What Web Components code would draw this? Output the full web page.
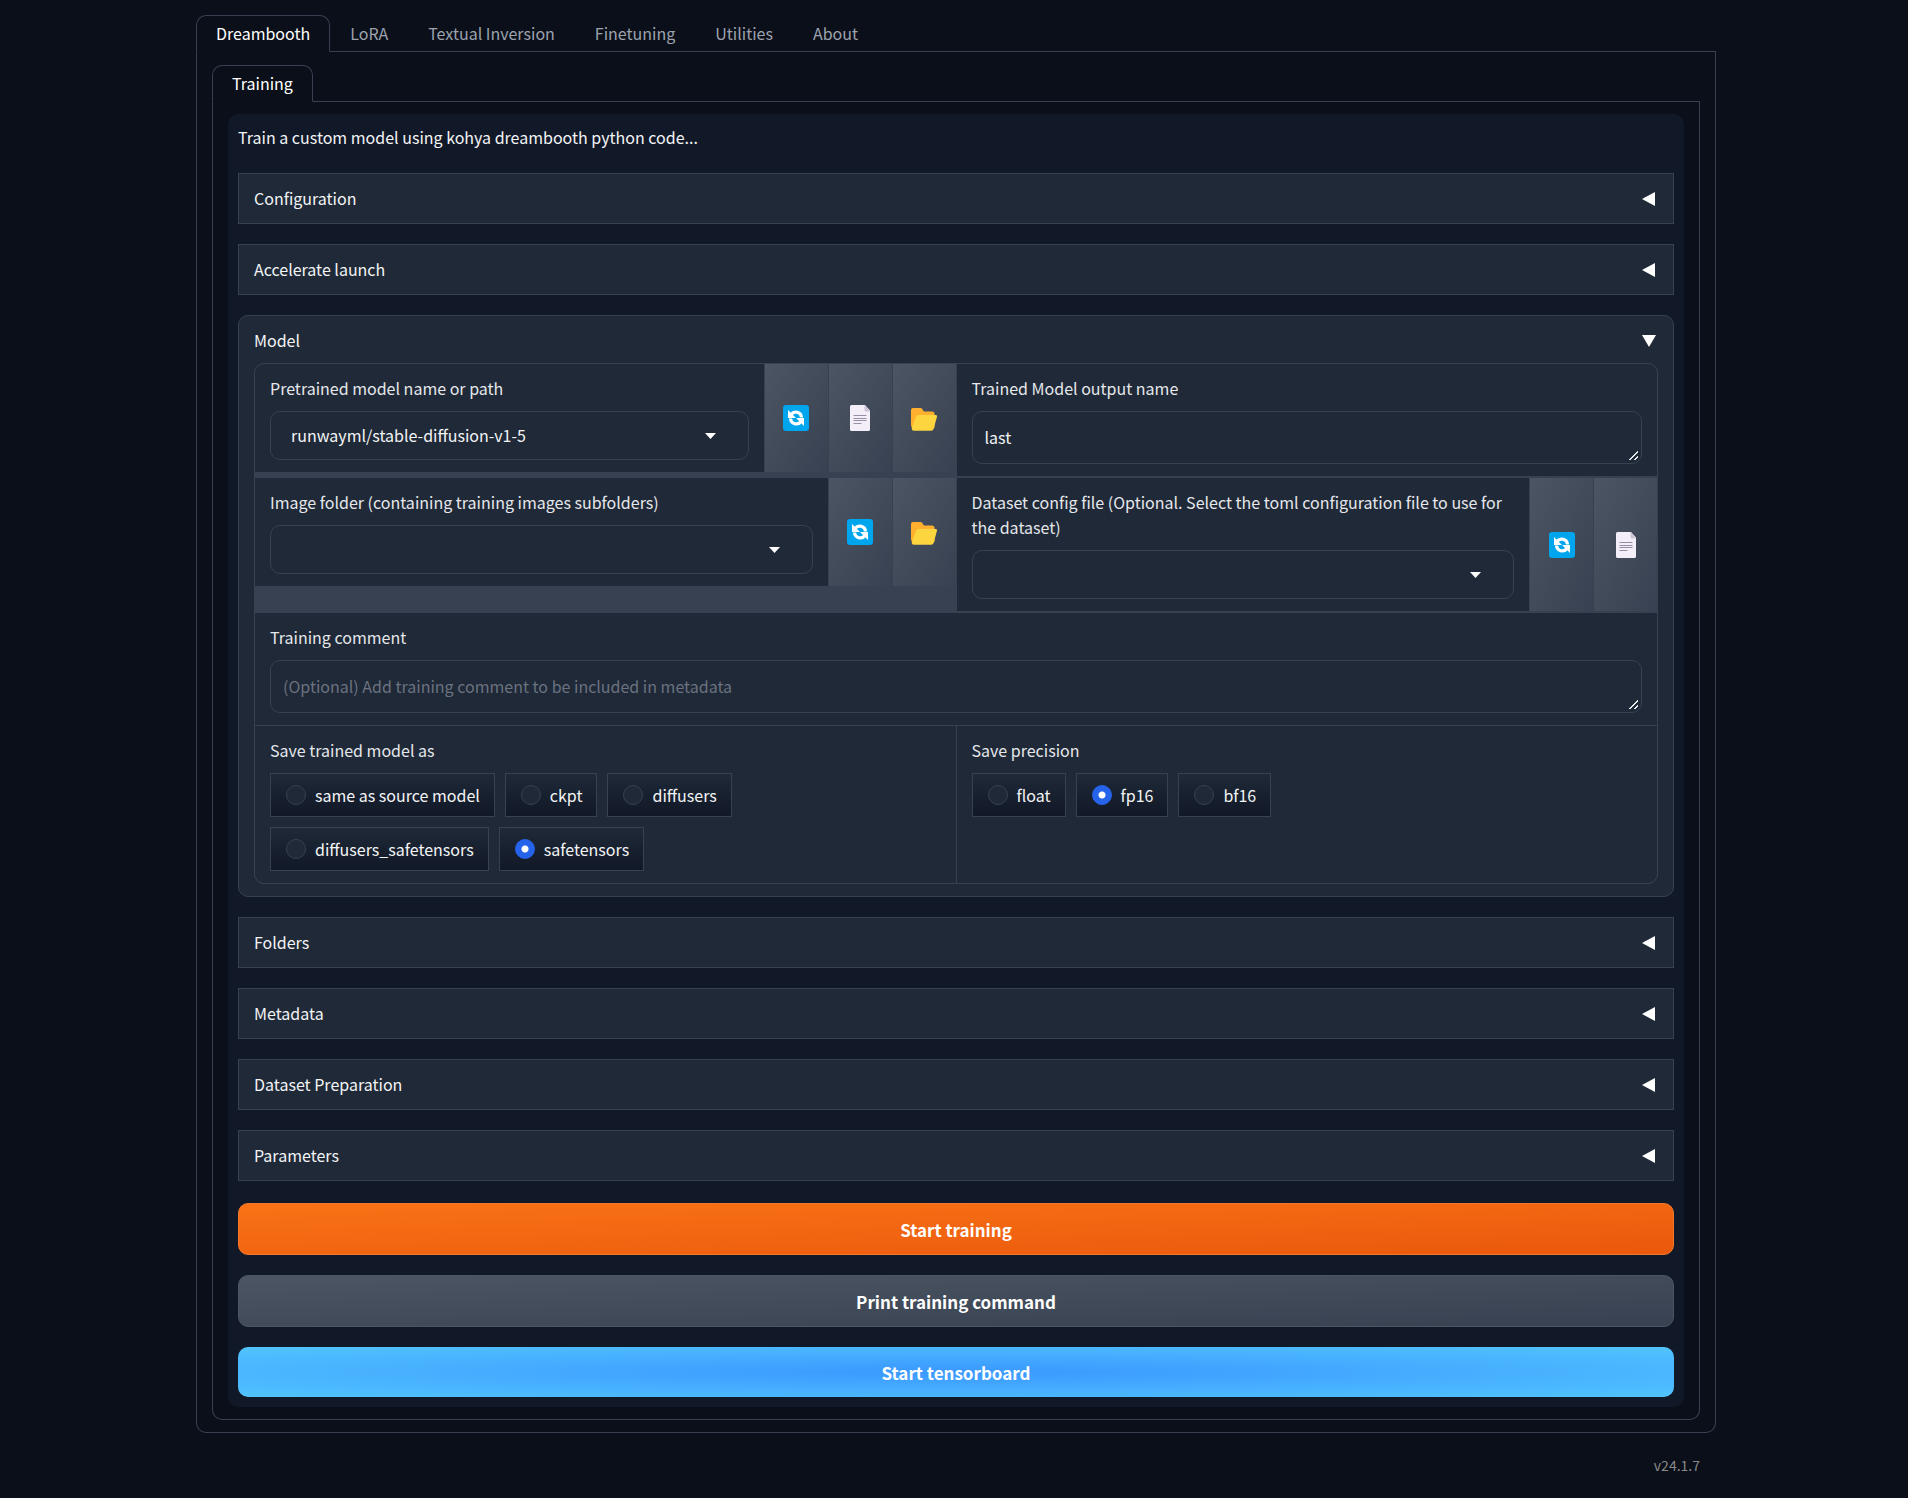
<!DOCTYPE html>
<html lang="en">
<head>
<meta charset="utf-8">
<title>Kohya_ss GUI</title>
<style>
  body {
    margin: 0;
    background: #0b0f19;
    color: #f3f4f6;
    color-scheme: dark;
    font: 16px/25px "Noto Sans CJK SC", "Noto Sans", sans-serif;
    --border: #374151;
    --block: #1f2937;
    --panel: #111827;
    --muted: #9ca3af;
  }
</style>
</head>
<body>
<kohya-app></kohya-app>

<script>
const base = `
  *, *::before, *::after { box-sizing: border-box; }
  :host { display: block; min-width: 0; box-sizing: border-box; }
  button, input, textarea, select { font: inherit; color: inherit; margin: 0; }
`;

const icons = {
  refresh: `<svg viewBox="0 0 26 26" width="26" height="26" aria-hidden="true">
    <rect width="26" height="26" rx="3" fill="#00a6ed"/>
    <g id="arrow">
      <path d="M8 9.500A5.800 5.800 0 0 1 18.500 12.500" fill="none" stroke="#fff" stroke-width="3.200"/>
      <path d="M5 5v8h8z" fill="#fff"/>
    </g>
    <use href="#arrow" transform="rotate(180 13 13)"/>
  </svg>`,
  document: `<svg viewBox="0 0 26 26" width="26" height="26" aria-hidden="true">
    <path d="M4.500 0H18l5 5.500V24.500a1.500 1.500 0 0 1-1.500 1.500h-17A1.500 1.500 0 0 1 3 24.500v-23A1.500 1.500 0 0 1 4.500 0z" fill="#f3eef8"/>
    <path d="M17.500 0 23 6.500h-4a1.500 1.500 0 0 1-1.500-1.500z" fill="#cdc4d6"/>
    <path d="M6.500 10.500h13M6.500 13.500h13M6.500 15.500h13M6.500 18.500h8" stroke="#998ea4" stroke-width="1"/>
  </svg>`,
  folder: `<svg viewBox="0 0 26 26" width="26" height="26" aria-hidden="true">
    <path d="M2 3h7.500a2 2 0 0 1 1.600.8l1.800 2.700H21a2.500 2.500 0 0 1 2.500 2.500v14H3a3 3 0 0 1-3-3V5a2 2 0 0 1 2-2z" fill="#ffb02e"/>
    <path d="M7.500 10h17a1.500 1.500 0 0 1 1.400 2l-3.300 12a2.500 2.500 0 0 1-2.400 1.800H3A2.500 2.500 0 0 1 .8 22.800L5 11.700A2.500 2.500 0 0 1 7.500 10z" fill="#fcd53f"/>
  </svg>`
};

class GrTabs extends HTMLElement {
  connectedCallback() {
    const names = this.getAttribute('names').split(',');
    const tabs = names.map((name, i) => `<button role="tab" aria-selected="${i === 0}">${name}</button>`).join('');
    this.attachShadow({ mode: 'open' }).innerHTML = `
      <style>${base}
        .nav { display: flex; border-bottom: 1px solid var(--border); }
        button {
          margin-bottom: -1px; padding: 5px 19px; color: var(--muted);
          background: none; border: 1px solid transparent; border-radius: 10px 10px 0 0; cursor: pointer;
        }
        button[aria-selected="true"] {
          color: #fff; background: #0b0f19; border-color: var(--border); border-bottom-color: #0b0f19;
        }
        .body {
          padding: 12px 15px; border: 1px solid var(--border); border-top: 0;
          border-radius: 0 0 10px 10px;
        }
      </style>
      <div class="nav" role="tablist">${tabs}</div>
      <div class="body" role="tabpanel"><slot></slot></div>
    `;
  }
}

class GrAccordion extends HTMLElement {
  connectedCallback() {
    const open = this.hasAttribute('open');
    const arrow = open ? 'M0 1h14L7 13z' : 'M13 0v14L0 7z';
    this.attachShadow({ mode: 'open' }).innerHTML = `
      <style>${base}
        :host { padding: 12px 15px; background: var(--block); border: 1px solid var(--border); }
        :host([open]) { border-radius: 10px; }
        button {
          display: flex; justify-content: space-between; align-items: center;
          width: 100%; padding: 0 2px 0 0; background: none; border: 0; cursor: pointer; text-align: left;
        }
        .content { padding-top: 10px; }
      </style>
      <button aria-expanded="${open}">
        <span>${this.getAttribute('label')}</span>
        <svg width="14" height="14" viewBox="0 0 14 14" aria-hidden="true"><path d="${arrow}" fill="#fff"/></svg>
      </button>
      ${open ? '<div class="content"><slot></slot></div>' : ''}
    `;
  }
}

class GrTextbox extends HTMLElement {
  connectedCallback() {
    this.attachShadow({ mode: 'open' }).innerHTML = `
      <style>${base}
        :host { padding: 12px 15px; background: var(--block); }
        label { display: block; margin-bottom: 10px; color: #e5e7eb; }
        textarea {
          display: block; width: 100%; height: 53px; padding: 13px 12px; resize: vertical; overflow: hidden;
          background: var(--block); border: 1px solid var(--border); border-radius: 10px; outline: none;
        }
        textarea::placeholder { color: #6b7280; opacity: 1; }
        textarea::-webkit-resizer {
          background: linear-gradient(135deg, transparent 45%, #e5e7eb 45% 56%, transparent 56% 75%, #e5e7eb 75% 87%, transparent 87%) center / 9px 9px no-repeat;
        }
      </style>
      <label for="box">${this.getAttribute('label')}</label>
      <textarea id="box" rows="1" placeholder="${this.getAttribute('placeholder') || ''}">${this.getAttribute('value') || ''}</textarea>
    `;
  }
}

class GrDropdown extends HTMLElement {
  connectedCallback() {
    const value = this.getAttribute('value') || '';
    this.attachShadow({ mode: 'open' }).innerHTML = `
      <style>${base}
        :host { flex: 1; padding: 12px 15px; background: var(--block); }
        label { display: block; margin-bottom: 10px; color: #e5e7eb; }
        .wrap {
          display: grid; align-items: center; height: 49px;
          border: 1px solid var(--border); border-radius: 10px;
        }
        .wrap > * { grid-area: 1 / 1; }
        select {
          appearance: none; width: 100%; height: 100%; padding: 0 20px;
          background: none; border: 0; outline: none;
        }
        svg { justify-self: end; margin-right: 32px; pointer-events: none; }
      </style>
      <label for="box">${this.getAttribute('label')}</label>
      <div class="wrap">
        <select id="box"><option>${value}</option></select>
        <svg width="11" height="6" viewBox="0 0 11 6" aria-hidden="true"><path d="M0 0h11L5.500 6z" fill="#fff"/></svg>
      </div>
    `;
  }
}

class GrTool extends HTMLElement {
  connectedCallback() {
    const icon = this.getAttribute('icon');
    this.attachShadow({ mode: 'open' }).innerHTML = `
      <style>${base}
        :host { flex: none; width: 63px; }
        button {
          display: flex; align-items: center; justify-content: center;
          width: 100%; height: 100%; padding: 0; border: 0; cursor: pointer;
          background: linear-gradient(to bottom right, #4b5563, #374151);
        }
      </style>
      <button aria-label="${icon}">${icons[icon]}</button>
    `;
  }
}

class GrRadio extends HTMLElement {
  connectedCallback() {
    const value = this.getAttribute('value');
    const chips = this.getAttribute('options').split(',').map(o => `
      <label><input type="radio" name="choice" value="${o}"${o === value ? ' checked' : ''}>${o}</label>`).join('');
    this.attachShadow({ mode: 'open' }).innerHTML = `
      <style>${base}
        :host { padding: 12px 15px; background: var(--block); }
        fieldset { margin: 0; padding: 0; border: 0; min-width: 0; }
        legend { padding: 0; margin-bottom: 10px; color: #e5e7eb; }
        .options { display: flex; flex-wrap: wrap; gap: 10px; max-width: 500px; }
        label {
          display: flex; align-items: center; gap: 9px; height: 44px; padding: 0 14px 0 15px;
          background: linear-gradient(to bottom, #1f2937, #111827); border: 1px solid var(--border);
        }
        input {
          appearance: none; width: 20px; height: 20px; border-radius: 50%;
          background: var(--block); border: 1px solid var(--border);
        }
        input:checked {
          border-color: #2563eb;
          background: radial-gradient(circle, #fff 3px, #2563eb 4px);
        }
      </style>
      <fieldset>
        <legend>${this.getAttribute('label')}</legend>
        <div class="options">${chips}</div>
      </fieldset>
    `;
  }
}

class GrButton extends HTMLElement {
  connectedCallback() {
    this.attachShadow({ mode: 'open' }).innerHTML = `
      <style>${base}
        button {
          display: block; width: 100%; height: 52px; padding: 0; cursor: pointer;
          font-size: 17px; font-weight: 700; color: #fff;
          background: linear-gradient(to bottom right, #4b5563, #374151);
          border: 1px solid #4b5563; border-radius: 10px;
        }
        :host([variant="primary"]) button {
          background: linear-gradient(to bottom right, #f97316, #ea580c);
          border-color: #f0782c;
        }
        :host([variant="board"]) button {
          height: 50px; border: 0;
          background: radial-gradient(ellipse, #3a98ff, #52c4ff);
        }
      </style>
      <button><slot></slot></button>
    `;
  }
}

class ModelForm extends HTMLElement {
  connectedCallback() {
    this.attachShadow({ mode: 'open' }).innerHTML = `
      <style>${base}
        :host {
          display: grid; gap: 2px; overflow: hidden;
          background: var(--border); border: 1px solid var(--border); border-radius: 10px;
        }
        .pair { display: grid; grid-template-columns: 1fr 1fr; gap: 2px 1px; align-items: start; }
        .field { display: flex; gap: 1px; }
        .rows { display: grid; gap: 1px; }
        .even { align-items: stretch; }
      </style>
      <div class="pair">
        <div class="field">
          <gr-dropdown label="Pretrained model name or path" value="runwayml/stable-diffusion-v1-5"></gr-dropdown>
          <gr-tool icon="refresh"></gr-tool>
          <gr-tool icon="document"></gr-tool>
          <gr-tool icon="folder"></gr-tool>
        </div>
        <gr-textbox label="Trained Model output name" value="last"></gr-textbox>
        <div class="field">
          <gr-dropdown label="Image folder (containing training images subfolders)"></gr-dropdown>
          <gr-tool icon="refresh"></gr-tool>
          <gr-tool icon="folder"></gr-tool>
        </div>
        <div class="field">
          <gr-dropdown label="Dataset config file (Optional. Select the toml configuration file to use for the dataset)"></gr-dropdown>
          <gr-tool icon="refresh"></gr-tool>
          <gr-tool icon="document"></gr-tool>
        </div>
      </div>
      <div class="rows">
        <gr-textbox label="Training comment" placeholder="(Optional) Add training comment to be included in metadata"></gr-textbox>
        <div class="pair even">
          <gr-radio label="Save trained model as" options="same as source model,ckpt,diffusers,diffusers_safetensors,safetensors" value="safetensors"></gr-radio>
          <gr-radio label="Save precision" options="float,fp16,bf16" value="fp16"></gr-radio>
        </div>
      </div>
    `;
  }
}

class KohyaApp extends HTMLElement {
  connectedCallback() {
    this.attachShadow({ mode: 'open' }).innerHTML = `
      <style>${base}
        :host { padding: 15px 192px 20px 196px; }
        .inner { display: block; padding-top: 1px; }
        .panel {
          display: flex; flex-direction: column; gap: 20px;
          padding: 11px 10px 10px; background: var(--panel); border-radius: 10px;
        }
        p { margin: 0 0 3px; }
        .actions { display: grid; gap: 20px; padding-top: 2px; }
        footer { padding: 20px 16px 0 0; text-align: right; font-size: 14px; color: #888; }
      </style>
      <gr-tabs names="Dreambooth,LoRA,Textual Inversion,Finetuning,Utilities,About">
        <gr-tabs class="inner" names="Training">
          <div class="panel">
            <p>Train a custom model using kohya dreambooth python code...</p>
            <gr-accordion label="Configuration"></gr-accordion>
            <gr-accordion label="Accelerate launch"></gr-accordion>
            <gr-accordion label="Model" open><model-form></model-form></gr-accordion>
            <gr-accordion label="Folders"></gr-accordion>
            <gr-accordion label="Metadata"></gr-accordion>
            <gr-accordion label="Dataset Preparation"></gr-accordion>
            <gr-accordion label="Parameters"></gr-accordion>
            <div class="actions">
              <gr-button variant="primary">Start training</gr-button>
              <gr-button>Print training command</gr-button>
              <gr-button variant="board">Start tensorboard</gr-button>
            </div>
          </div>
        </gr-tabs>
      </gr-tabs>
      <footer>v24.1.7</footer>
    `;
  }
}

customElements.define('gr-tabs', GrTabs);
customElements.define('gr-accordion', GrAccordion);
customElements.define('gr-textbox', GrTextbox);
customElements.define('gr-dropdown', GrDropdown);
customElements.define('gr-tool', GrTool);
customElements.define('gr-radio', GrRadio);
customElements.define('gr-button', GrButton);
customElements.define('model-form', ModelForm);
customElements.define('kohya-app', KohyaApp);
</script>
</body>
</html>
